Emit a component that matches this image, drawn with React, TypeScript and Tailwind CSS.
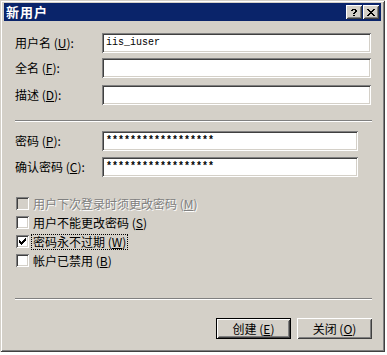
import React from 'react';

const sunken =
  'shadow-[inset_1px_1px_#808080,inset_-1px_-1px_#ffffff,inset_2px_2px_#404040,inset_-2px_-2px_#d4d0c8]';
const raised =
  'shadow-[inset_1px_1px_#ffffff,inset_-1px_-1px_#404040,inset_2px_2px_#d4d0c8,inset_-2px_-2px_#808080]';

const Px: React.FC<{ rows: string[]; className?: string }> = ({ rows, className }) => (
  <svg
    className={className}
    width={rows[0].length}
    height={rows.length}
    viewBox={`0 0 ${rows[0].length} ${rows.length}`}
    shapeRendering="crispEdges"
  >
    {rows.flatMap((r, y) =>
      r.split('').map((c, x) => (c === 'x' ? <rect key={`${x}-${y}`} x={x} y={y} width={1} height={1} fill="#000" /> : null))
    )}
  </svg>
);

const Key: React.FC<{ k: string }> = ({ k }) => (
  <>
    {' '}(<span className="underline">{k}</span>)
  </>
);

const Field: React.FC<{ label: string; k: string; value?: string; short?: boolean; className?: string }> = ({
  label,
  k,
  value,
  short,
  className,
}) => (
  <div className={`flex items-center h-[20px] ${className ?? ''}`}>
    <div className="w-[87px] shrink-0 whitespace-nowrap">
      {label}
      <Key k={k} />:
    </div>
    <div
      className={`h-[20px] bg-white ${sunken} flex items-center pl-[4px] ${short ? 'w-[256px]' : 'flex-1 mr-[1px]'}`}
      style={{ fontFamily: '"Liberation Mono", "DejaVu Sans Mono", monospace' }}
    >
      <span className={`text-[10px] leading-none ${value && value[0] === '*' ? 'font-bold' : ''}`}>{value}</span>
    </div>
  </div>
);

const Check: React.FC<{ label: string; k: string; checked?: boolean; disabled?: boolean; focus?: boolean }> = ({
  label,
  k,
  checked,
  disabled,
  focus,
}) => (
  <div className="flex items-center h-[19px]">
    <div
      className={`ml-[1px] w-[13px] h-[13px] shrink-0 ${disabled ? 'bg-[#d4d0c8]' : 'bg-white'} ${sunken} flex items-center justify-center`}
    >
      {checked && <Px rows={['......x', '.....xx', 'x...xxx', 'xx.xxx.', 'xxxxx..', '.xxx...', '..x....']} />}
    </div>
    <span
      className={`whitespace-nowrap ${
        focus ? 'ml-[2px] px-[1px] border border-dotted border-black leading-[14px]' : 'ml-[4px]'
      } ${disabled ? 'text-[#808080] [text-shadow:1px_1px_0_#ffffff]' : 'text-black'}`}
    >
      {label}
      <Key k={k} />
    </span>
  </div>
);

const Separator: React.FC<{ className?: string }> = ({ className }) => (
  <div className={`h-[2px] border-t border-[#808080] border-b border-b-white ${className ?? ''}`} />
);

export default function App() {
  return (
    <div
      className="w-[387px] h-[355px] bg-white overflow-hidden text-[12px] leading-[14px] text-black"
      style={{ fontFamily: '"Noto Sans CJK SC", "Noto Sans", sans-serif' }}
    >
      <div
        className="w-[385px] h-[352px] bg-[#d4d0c8] flex flex-col pt-[3px] pl-[4px] pr-[4px] pb-[4px] shadow-[inset_1px_1px_#d4d0c8,inset_-1px_-1px_#404040,inset_2px_2px_#ffffff,inset_-2px_-2px_#808080]"
      >
        {/* title bar */}
        <div className="h-[18px] bg-[#0a246a] flex items-center pl-[2px] pr-[2px]">
          <span className="text-white font-bold text-[13px] tracking-[1px]">新用户</span>
          <div className="ml-auto flex gap-[1px]">
            <div className={`w-[16px] h-[14px] bg-[#d4d0c8] ${raised} flex items-center justify-center`}>
              <Px rows={['.xxxx.', 'xx..xx', '....xx', '...xx.', '..xx..', '......', '..xx..']} />
            </div>
            <div className={`w-[16px] h-[14px] bg-[#d4d0c8] ${raised} flex items-center justify-center`}>
              <Px rows={['xx....xx', '.xx..xx.', '..xxxx..', '...xx...', '..xxxx..', '.xx..xx.', 'xx....xx']} />
            </div>
          </div>
        </div>

        {/* body */}
        <div className="flex-1 flex flex-col pl-[11px] pr-[9px]">
          <Field className="mt-[12px]" label="用户名" k="U" value="iis_iuser" />
          <Field className="mt-[5px]" label="全名" k="F" />
          <Field className="mt-[7px]" label="描述" k="D" />

          <Separator className="mt-[15px]" />

          <Field className="mt-[9px]" label="密码" k="P" value="******************" short />
          <Field className="mt-[6px]" label="确认密码" k="C" value="******************" short />

          <div className="mt-[17px] flex flex-col">
            <Check label="用户下次登录时须更改密码" k="M" disabled />
            <Check label="用户不能更改密码" k="S" />
            <Check label="密码永不过期" k="W" checked focus />
            <Check label="帐户已禁用" k="B" />
          </div>

          <Separator className="mt-[28px]" />

          <div className="mt-[18px] flex justify-end gap-[6px]">
            <div className="w-[75px] h-[21px] border border-black bg-[#d4d0c8]">
              <div className={`w-full h-full ${raised} flex items-center justify-center`}>
                创建<Key k="E" />
              </div>
            </div>
            <div className={`w-[75px] h-[21px] bg-[#d4d0c8] ${raised} flex items-center justify-center`}>
              关闭<Key k="O" />
            </div>
          </div>
        </div>
      </div>
    </div>
  );
}
